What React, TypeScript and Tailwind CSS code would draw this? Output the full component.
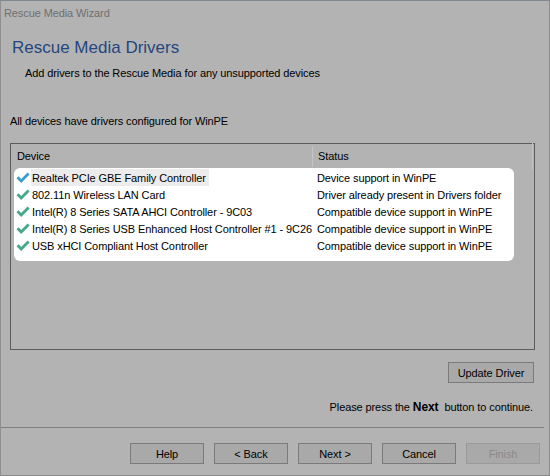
import React from "react";

const font = { fontFamily: '"Liberation Sans", Arial, sans-serif' };

function Check({ color }: { color: string }) {
  return (
    <svg width="14" height="12" viewBox="0 0 14 12" className="shrink-0">
      <path d="M0.5 6.2 L2.6 4.3 L5.2 6.9 L11.6 0.6 L13.6 2.5 L5.2 10.9 Z" fill={color} />
    </svg>
  );
}

const rows = [
  { d: "Realtek PCIe GBE Family Controller", s: "Device support in WinPE", sel: true },
  { d: "802.11n Wireless LAN Card", s: "Driver already present in Drivers folder" },
  { d: "Intel(R) 8 Series SATA AHCI Controller - 9C03", s: "Compatible device support in WinPE" },
  { d: "Intel(R) 8 Series USB Enhanced Host Controller #1 - 9C26", s: "Compatible device support in WinPE" },
  { d: "USB xHCI Compliant Host Controller", s: "Compatible device support in WinPE" },
];

function Btn({ children, disabled }: { children: React.ReactNode; disabled?: boolean }) {
  return (
    <div
      className={`w-[74px] h-[21px] flex items-center justify-center border bg-[#a9a9a9] ${
        disabled ? "border-[#9a9a9a] text-[#8a8a8a]" : "border-[#7a7a7a] text-black"
      }`}
    >
      {children}
    </div>
  );
}

export default function App() {
  return (
    <div
      style={font}
      className="w-[550px] h-[476px] bg-[#b3b3b3] border-t border-t-[#7e8793] border-l border-l-[#8f8f8f] border-r border-r-[#8a8a8a] border-b border-b-[#8a8a8a] flex flex-col text-[11px] leading-[16px] tracking-[-0.1px] text-black overflow-hidden whitespace-nowrap"
    >
      <div className="pl-[3px] pt-[4px] text-[#6f6f6f]">Rescue Media Wizard</div>
      <div className="pl-[11px] mt-[16px] text-[17px] leading-[22px] tracking-normal text-[#26467f]">Rescue Media Drivers</div>
      <div className="pl-[24px] mt-[6px]">Add drivers to the Rescue Media for any unsupported devices</div>
      <div className="pl-[9px] mt-[32px]">All devices have drivers configured for WinPE</div>

      <div className="ml-[9px] mt-[14px] w-[525px] h-[207px] border border-[#5c5c5c] flex flex-col">
        <div className="h-[24px] flex items-center shrink-0">
          <div className="w-[301px] pl-[6px] h-full flex items-center">Device</div>
          <div className="w-px h-[21px] bg-[#c4c4c4]" />
          <div className="flex-1 pl-[5px] h-full flex items-center">Status</div>
          <div className="w-px h-[26px] bg-[#c4c4c4] mr-[1px]" />
        </div>
        <div className="ml-[3px] w-[500px] bg-white rounded-[6px] pt-px pb-[7px]">
          {rows.map((r, i) => (
            <div key={i} className="h-[17px] flex items-center">
              <div className="w-[297px] flex items-center pl-[2px]">
                <Check color={i === 0 ? "#3a9fd0" : "#45a888"} />
                <span className={`ml-[1px] pl-[1px] pr-[3px] h-[17px] flex items-center ${r.sel ? "bg-[#ececec]" : ""}`}>
                  {r.d}
                </span>
              </div>
              <div className="pl-[6px]">{r.s}</div>
            </div>
          ))}
        </div>
      </div>

      <div className="self-end mr-[15px] mt-[12px] w-[86px] h-[21px] flex items-center justify-center border border-[#7a7a7a] bg-[#a9a9a9]">
        Update Driver
      </div>
      <div className="self-end mr-[16px] mt-[16px] whitespace-pre">
        Please press the <b className="text-[12px]">Next</b>  button to continue.
      </div>
      <div className="mt-[12px] mr-[5px] h-px bg-[#7f7f7f]" />
      <div className="mt-[15px] mr-[9px] flex justify-end gap-[10px]">
        <Btn>Help</Btn>
        <Btn>&lt; Back</Btn>
        <Btn>Next &gt;</Btn>
        <Btn>Cancel</Btn>
        <Btn disabled>Finish</Btn>
      </div>
    </div>
  );
}
